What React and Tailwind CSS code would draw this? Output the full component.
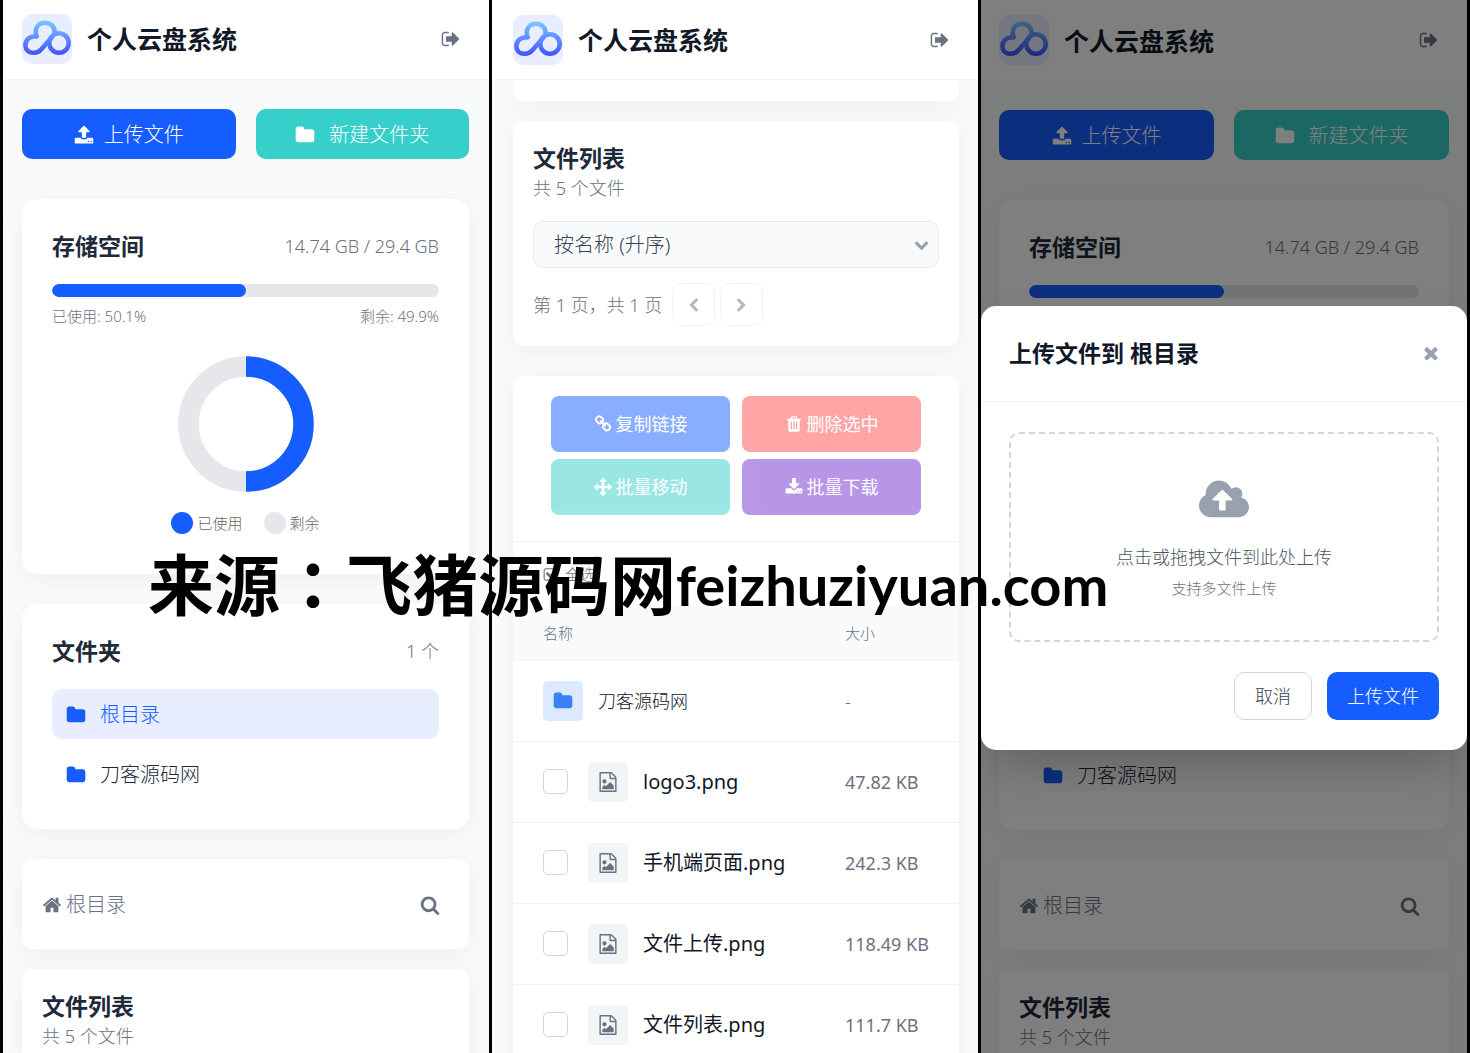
import React, { useState } from 'react';
import clsx from 'clsx';

const ICONS = {
  upload: 'M1344 1472q0-26-19-45t-45-19-45 19-19 45 19 45 45 19 45-19 19-45zm256 0q0-26-19-45t-45-19-45 19-19 45 19 45 45 19 45-19 19-45zm128-224v320q0 40-28 68t-68 28h-1472q-40 0-68-28t-28-68v-320q0-40 28-68t68-28h427q21 56 70.5 92t110.5 36h256q61 0 110.5-36t70.5-92h427q40 0 68 28t28 68zm-325-648q-17 40-59 40h-256v448q0 26-19 45t-45 19h-256q-26 0-45-19t-19-45v-448h-256q-42 0-59-40-17-39 14-69l448-448q18-19 45-19t45 19l448 448q31 30 14 69z',
  folder: 'M1728 608v704q0 92-66 158t-158 66h-1216q-92 0-158-66t-66-158v-960q0-92 66-158t158-66h320q92 0 158 66t66 158v32h672q92 0 158 66t66 158z',
  signOut: 'M704 1440q0 4 1 20t.5 26.5-3 23.5-10 19.5-20.5 6.5h-320q-119 0-203.5-84.5t-84.5-203.5v-704q0-119 84.5-203.5t203.5-84.5h320q13 0 22.5 9.5t9.5 22.5q0 4 1 20t.5 26.5-3 23.5-10 19.5-20.5 6.5h-320q-66 0-113 47t-47 113v704q0 66 47 113t113 47h312l11.5 1 11.5 3 8 5.5 7 9 2 13.5zm928-544q0 26-19 45l-544 544q-19 19-45 19t-45-19-19-45v-288h-448q-26 0-45-19t-19-45v-384q0-26 19-45t45-19h448v-288q0-26 19-45t45-19 45 19l544 544q19 19 19 45z',
  home: 'M1472 992v480q0 26-19 45t-45 19h-384v-384h-256v384h-384q-26 0-45-19t-19-45v-480q0-1 .5-3t.5-3l575-474 575 474q1 2 1 6zm223-69l-62 74q-8 9-21 11h-3q-13 0-21-7l-692-577-692 577q-12 8-24 7-13-2-21-11l-62-74q-8-10-7-23.5t11-21.5l719-599q32-26 76-26t76 26l244 204v-195q0-14 9-23t23-9h192q14 0 23 9t9 23v408l219 182q10 8 11 21.5t-7 23.5z',
  search: 'M1216 832q0-185-131.5-316.5t-316.5-131.5-316.5 131.5-131.5 316.5 131.5 316.5 316.5 131.5 316.5-131.5 131.5-316.5zm512 832q0 52-38 90t-90 38q-54 0-90-38l-343-342q-179 124-399 124-143 0-273.5-55.5t-225-150-150-225-55.5-273.5 55.5-273.5 150-225 225-150 273.5-55.5 273.5 55.5 225 150 150 225 55.5 273.5q0 220-124 399l343 343q37 37 37 90z',
  download: 'M1344 1344q0-26-19-45t-45-19-45 19-19 45 19 45 45 19 45-19 19-45zm256 0q0-26-19-45t-45-19-45 19-19 45 19 45 45 19 45-19 19-45zm128-224v320q0 40-28 68t-68 28h-1472q-40 0-68-28t-28-68v-320q0-40 28-68t68-28h465l135 136q58 56 136 56t136-56l136-136h464q40 0 68 28t28 68zm-325-569q17 41-14 70l-448 448q-18 19-45 19t-45-19l-448-448q-31-29-14-70 17-39 59-39h256v-448q0-26 19-45t45-19h256q26 0 45 19t19 45v448h256q42 0 59 39z',
  trash: 'M704 1376v-704q0-14-9-23t-23-9h-64q-14 0-23 9t-9 23v704q0 14 9 23t23 9h64q14 0 23-9t9-23zm256 0v-704q0-14-9-23t-23-9h-64q-14 0-23 9t-9 23v704q0 14 9 23t23 9h64q14 0 23-9t9-23zm256 0v-704q0-14-9-23t-23-9h-64q-14 0-23 9t-9 23v704q0 14 9 23t23 9h64q14 0 23-9t9-23zm-544-992h448l-48-117q-7-9-17-11h-317q-10 2-17 11zm928 32v64q0 14-9 23t-23 9h-96v948q0 83-47 143.5t-113 60.5h-832q-66 0-113-58.5t-47-141.5v-952h-96q-14 0-23-9t-9-23v-64q0-14 9-23t23-9h309l70-167q15-37 54-63t79-26h320q40 0 79 26t54 63l70 167h309q14 0 23 9t9 23z',
  move: 'M1792 896q0 26-19 45l-256 256q-19 19-45 19t-45-19-19-45v-128h-384v384h128q26 0 45 19t19 45-19 45l-256 256q-19 19-45 19t-45-19l-256-256q-19-19-19-45t19-45 45-19h128v-384h-384v128q0 26-19 45t-45 19-45-19l-256-256q-19-19-19-45t19-45l256-256q19-19 45-19t45 19 19 45v128h384v-384h-128q-26 0-45-19t-19-45 19-45l256-256q19-19 45-19t45 19l256 256q19 19 19 45t-19 45-45 19h-128v384h384v-128q0-26 19-45t45-19 45 19l256 256q19 19 19 45z',
  link: 'M1520 1216q0-40-28-68l-208-208q-28-28-68-28-42 0-72 32 3 3 19 18.5t21.5 21.5 15 19 13 25.5 3.5 27.5q0 40-28 68t-68 28q-15 0-27.5-3.5t-25.5-13-19-15-21.5-21.5-18.5-19q-33 31-33 73 0 40 28 68l206 207q27 27 68 27 40 0 68-26l147-146q28-28 28-67zm-703-705q0-40-28-68l-206-207q-28-28-68-28-39 0-68 27l-147 146q-28 28-28 67 0 40 28 68l208 208q27 27 68 27 42 0 72-31-3-3-19-18.5t-21.5-21.5-15-19-13-25.5-3.5-27.5q0-40 28-68t68-28q15 0 27.5 3.5t25.5 13 19 15 21.5 21.5 18.5 19q33-31 33-73zm895 705q0 120-85 203l-147 146q-83 83-203 83-121 0-204-85l-206-207q-83-83-83-203 0-123 88-209l-88-88q-86 88-208 88-120 0-204-84l-208-208q-84-84-84-204t85-203l147-146q83-83 203-83 121 0 204 85l206 207q83 83 83 203 0 123-88 209l88 88q86-88 208-88 120 0 204 84l208 208q84 84 84 204z',
  times: 'M1490 1322q0 40-28 68l-136 136q-28 28-68 28t-68-28l-294-294-294 294q-28 28-68 28t-68-28l-136-136q-28-28-28-68t28-68l294-294-294-294q-28-28-28-68t28-68l136-136q28-28 68-28t68 28l294 294 294-294q28-28 68-28t68 28l136 136q28 28 28 68t-28 68l-294 294 294 294q28 28 28 68z',
  left: 'M1427 301l-531 531 531 531q19 19 19 45t-19 45l-166 166q-19 19-45 19t-45-19l-742-742q-19-19-19-45t19-45l742-742q19-19 45-19t45 19l166 166q19 19 19 45t-19 45z',
  right: 'M1363 877l-742 742q-19 19-45 19t-45-19l-166-166q-19-19-19-45t19-45l531-531-531-531q-19-19-19-45t19-45l166-166q19-19 45-19t45 19l742 742q19 19 19 45t-19 45z',
  down: 'M1683 808l-742 741q-19 19-45 19t-45-19l-742-741q-19-19-19-45.5t19-45.5l166-165q19-19 45-19t45 19l531 531 531-531q19-19 45-19t45 19l166 165q19 19 19 45.5t-19 45.5z',
  cloudUpload: 'M1216 864q0-14-9-23l-352-352q-9-9-23-9t-23 9l-351 351q-10 12-10 24 0 14 9 23t23 9h224v352q0 13 9.5 22.5t22.5 9.5h192q13 0 22.5-9.5t9.5-22.5v-352h224q13 0 22.5-9.5t9.5-22.5zm640 288q0 159-112.5 271.5t-271.5 112.5h-1088q-185 0-316.5-131.5t-131.5-316.5q0-130 70-240t188-165q-2-30-2-43 0-212 150-362t362-150q156 0 285.5 87t188.5 231q71-62 166-62 106 0 181 75t75 181q0 76-41 138 130 31 213.5 135.5t83.5 238.5z',
  fileImage: 'M1596 380q28 28 48 76t20 88v1152q0 40-28 68t-68 28h-1344q-40 0-68-28t-28-68v-1600q0-40 28-68t68-28h896q40 0 88 20t76 48zm-444-244v376h376q-10-29-22-41l-313-313q-12-12-41-22zm384 1528v-1024h-416q-40 0-68-28t-28-68v-416h-768v1536h1280zm-128-448v320h-1024v-192l192-192 128 128 384-384zm-832-192q-80 0-136-56t-56-136 56-136 136-56 136 56 56 136-56 136-136 56z',
  checkSquare: 'M1472 930v318q0 119-84.5 203.5t-203.5 84.5h-832q-119 0-203.5-84.5t-84.5-203.5v-832q0-119 84.5-203.5t203.5-84.5h832q63 0 117 25 15 7 18 23 3 17-9 29l-49 49q-10 10-23 10-3 0-9-2-23-6-45-6h-832q-66 0-113 47t-47 113v832q0 66 47 113t113 47h832q66 0 113-47t47-113v-254q0-13 9-22l64-64q10-10 23-10 6 0 12 3 20 8 20 29zm231-489l-814 814q-24 24-57 24t-57-24l-430-430q-24-24-24-57t24-57l110-110q24-24 57-24t57 24l263 263 647-647q24-24 57-24t57 24l110 110q24 24 24 57t-24 57z',
};

const files = [
  { name: 'logo3.png', size: '47.82 KB' },
  { name: '手机端页面.png', size: '242.3 KB' },
  { name: '文件上传.png', size: '118.49 KB' },
  { name: '文件列表.png', size: '111.7 KB' },
];

const batchActions = [
  { label: '复制链接', icon: 'link', color: 'bg-[#165dff]' },
  { label: '删除选中', icon: 'trash', color: 'bg-[#ff4d4f]' },
  { label: '批量移动', icon: 'move', color: 'bg-[#36cfc9]' },
  { label: '批量下载', icon: 'download', color: 'bg-[#722ed1]' },
];

const CARD_SHADOW = 'shadow-[0_5px_25px_rgba(0,0,0,0.05)]';

function Icon({ name, className, viewBox = '0 0 1792 1792' }) {
  return (
    <svg viewBox={viewBox} fill="currentColor" className={clsx('shrink-0', className)} aria-hidden="true">
      <path d={ICONS[name]} />
    </svg>
  );
}

function Logo({ id }) {
  return (
    <svg viewBox="0 0 50 50" className="w-[50px] h-[50px] rounded-[10px] bg-[#e8eeff]" aria-hidden="true">
      <defs>
        <linearGradient id={id} gradientUnits="userSpaceOnUse" x1="0" y1="7" x2="0" y2="41">
          <stop offset="0" stopColor="#78c8ff" />
          <stop offset="1" stopColor="#4350ff" />
        </linearGradient>
      </defs>
      <g fill="none" stroke={`url(#${id})`} strokeWidth="4.500" strokeLinecap="round" strokeLinejoin="round">
        <path d="M14.6 22.2C12 14.5 16 8.800 23 8.800c6.400 0 10.400 4.600 9.600 11" />
        <path d="M14.6 22.2C7.600 21.600 3.400 25.800 3.400 31c0 5 3.600 7.800 8.200 7.800 3.600 0 5.800-1.200 8-3.800L30 23" />
        <circle cx="37" cy="29" r="9.700" />
      </g>
    </svg>
  );
}

function Header({ id, className }) {
  return (
    <header className={clsx('relative z-10 flex items-center bg-white border-b border-gray-100 pr-7', className)}>
      <Logo id={id} />
      <h1 className="ml-[15px] flex-1 pt-[2px] text-[25px] leading-[35px] font-bold text-[#111827]">个人云盘系统</h1>
      <button className="text-gray-500" aria-label="退出">
        <Icon name="signOut" className="w-5 h-5" />
      </button>
    </header>
  );
}

function Donut() {
  return (
    <svg viewBox="0 0 136 136" className="w-[136px] h-[136px]" aria-hidden="true">
      <circle cx="68" cy="68" r="57.500" fill="none" stroke="#e5e7eb" strokeWidth="20.500" />
      <path d="M68 10.500a57.500 57.500 0 0 1 0 115" fill="none" stroke="#165dff" strokeWidth="20.500" />
    </svg>
  );
}

function StorageCard() {
  return (
    <section className={clsx('rounded-[15px] bg-white p-[30px] pb-10', CARD_SHADOW)}>
      <div className="flex items-center justify-between">
        <h2 className="text-[23px] leading-[35px] font-bold text-gray-800">存储空间</h2>
        <span className="text-lg leading-[25px] text-gray-500">14.74 GB / 29.4 GB</span>
      </div>
      <div className="mt-5 h-[13px] overflow-hidden rounded-full bg-gray-200">
        <div className="h-full rounded-full bg-[#165dff]" style={{ width: '50.1%' }} />
      </div>
      <div className="mt-[9px] flex justify-between text-[15px] leading-5 text-gray-500">
        <span>已使用: 50.1%</span>
        <span>剩余: 49.9%</span>
      </div>
      <div className="mt-[30px] flex flex-col items-center">
        <Donut />
        <div className="mt-5 flex items-center gap-[21px] text-[15px] leading-[22px] text-[#666]">
          <span className="flex items-center gap-1">
            <i className="h-[22px] w-[22px] rounded-full bg-[#165dff]" />
            已使用
          </span>
          <span className="flex items-center gap-1">
            <i className="h-[22px] w-[22px] rounded-full bg-gray-200" />
            剩余
          </span>
        </div>
      </div>
    </section>
  );
}

function FolderCard() {
  return (
    <section className={clsx('rounded-[15px] bg-white p-[30px]', CARD_SHADOW)}>
      <div className="flex items-center justify-between">
        <h2 className="text-[23px] leading-[35px] font-bold text-gray-800">文件夹</h2>
        <span className="text-lg leading-[25px] text-gray-500">1 个</span>
      </div>
      <nav className="mt-5 flex flex-col gap-[10px] text-xl">
        <a href="#root" className="flex h-[50px] items-center gap-[14px] rounded-[10px] bg-[#e8eeff] px-[14px] pt-[2px] text-[#165dff]">
          <Icon name="folder" className="w-5 h-5" />
          根目录
        </a>
        <a href="#folder" className="flex h-[50px] items-center gap-[14px] rounded-[10px] px-[14px] pt-[2px] text-gray-800">
          <Icon name="folder" className="w-5 h-5 text-[#165dff]" />
          刀客源码网
        </a>
      </nav>
    </section>
  );
}

function ListTitle() {
  return (
    <>
      <h2 className="text-[23px] leading-[35px] font-bold text-gray-800">文件列表</h2>
      <p className="text-lg leading-[25px] text-gray-500">共 5 个文件</p>
    </>
  );
}

function HomeContent({ className }) {
  return (
    <div className={clsx('pt-[29px]', className)}>
      <div className="grid grid-cols-2 gap-5 text-xl text-white">
        <button className="flex h-[50px] items-center justify-center gap-[10px] rounded-[10px] bg-[#165dff] pt-[2px]">
          <Icon name="upload" className="w-5 h-5" />
          上传文件
        </button>
        <button className="flex h-[50px] items-center justify-center gap-[14px] rounded-[10px] bg-[#36cfc9] pt-[2px]">
          <Icon name="folder" className="w-5 h-5" />
          新建文件夹
        </button>
      </div>
      <div className="mt-10 flex flex-col gap-[30px]">
        <StorageCard />
        <FolderCard />
      </div>
      <div className={clsx('mt-[30px] flex h-[90px] items-center justify-between rounded-[10px] bg-white pl-5 pr-[29px] pt-[2px] text-gray-500', CARD_SHADOW)}>
        <a href="#root" className="flex items-center gap-1 text-xl">
          <Icon name="home" className="w-5 h-5" />
          根目录
        </a>
        <button aria-label="搜索">
          <Icon name="search" className="w-5 h-5" />
        </button>
      </div>
      <section className={clsx('mt-5 rounded-[10px] bg-white p-5', CARD_SHADOW)}>
        <ListTitle />
      </section>
    </div>
  );
}

function FileTable() {
  return (
    <table className="w-full table-fixed text-left">
      <thead>
        <tr className="h-[53px] border-b border-gray-100 bg-[#f9fafb] text-[15px] text-gray-500">
          <th className="pl-[30px] font-light">名称</th>
          <th className="w-36 pl-[30px] font-light">大小</th>
        </tr>
      </thead>
      <tbody>
        <tr className="h-[81px] border-b border-gray-100">
          <td className="pl-[30px]">
            <div className="flex items-center gap-[15px]">
              <span className="flex h-10 w-10 items-center justify-center rounded-[5px] bg-blue-100 text-[#3b82f6]">
                <Icon name="folder" className="w-5 h-5" />
              </span>
              <span className="text-lg text-gray-900">刀客源码网</span>
            </div>
          </td>
          <td className="pl-[30px] text-lg text-gray-500">-</td>
        </tr>
        {files.map((f) => (
          <tr key={f.name} className="h-[81px] border-b border-gray-100">
            <td className="pl-[30px]">
              <div className="flex items-center">
                <input
                  type="checkbox"
                  aria-label={f.name}
                  className="h-[25px] w-[25px] appearance-none rounded-[5px] border border-gray-300 bg-white checked:bg-[#165dff]"
                />
                <span className="ml-5 flex h-10 w-10 items-center justify-center rounded-[5px] bg-gray-100 text-gray-500">
                  <Icon name="fileImage" className="w-5 h-5" />
                </span>
                <span className="ml-[15px] text-xl font-normal text-gray-900">{f.name}</span>
              </div>
            </td>
            <td className="pl-[30px] text-lg font-normal text-gray-500">{f.size}</td>
          </tr>
        ))}
      </tbody>
    </table>
  );
}

function ListContent() {
  const [sort, setSort] = useState('name');

  return (
    <div className="pl-[21px] pr-[19px]">
      <div className={clsx('h-[21px] rounded-b-[10px] bg-white', CARD_SHADOW)} />
      <section className={clsx('mt-5 rounded-[10px] bg-white p-5', CARD_SHADOW)}>
        <ListTitle />
        <div className="relative mt-5">
          <select
            value={sort}
            onChange={(e) => setSort(e.target.value)}
            aria-label="排序"
            className="h-[47px] w-full appearance-none rounded-[10px] border border-gray-200 bg-[#f9fafb] px-5 text-xl text-gray-700"
          >
            <option value="name">按名称 (升序)</option>
            <option value="size">按大小 (升序)</option>
          </select>
          <Icon name="down" className="pointer-events-none absolute right-[10px] top-4 w-[15px] h-[15px] text-gray-400" />
        </div>
        <div className="mt-[15px] flex items-center text-lg text-gray-500">
          <span>第 1 页，共 1 页</span>
          <button disabled aria-label="上一页" className="ml-[10px] flex h-[43px] w-[43px] items-center justify-center rounded-[10px] border border-gray-200 pt-[2px] opacity-50">
            <Icon name="left" className="w-[15px] h-[15px]" />
          </button>
          <button disabled aria-label="下一页" className="ml-[5px] flex h-[43px] w-[43px] items-center justify-center rounded-[10px] border border-gray-200 pt-[2px] opacity-50">
            <Icon name="right" className="w-[15px] h-[15px]" />
          </button>
        </div>
      </section>

      <section className={clsx('mt-[30px] rounded-t-[10px] bg-white', CARD_SHADOW)}>
        <div className="grid grid-cols-2 gap-x-3 gap-y-[7px] border-b border-gray-100 px-[38px] pt-5 pb-[26px]">
          {batchActions.map((a) => (
            <button
              key={a.label}
              disabled
              className={clsx('flex h-14 items-center justify-center gap-1 rounded-[8px] text-lg font-normal text-white opacity-50', a.color)}
            >
              <Icon name={a.icon} className="w-[18px] h-[18px]" />
              {a.label}
            </button>
          ))}
        </div>
        <div className="flex h-[65px] items-center px-[30px]">
          <button className="flex items-center gap-[6px] text-[15px] text-gray-500">
            <Icon name="checkSquare" className="w-4 h-4" />
            全选
          </button>
        </div>
        <FileTable />
      </section>
    </div>
  );
}

function UploadModal() {
  return (
    <div className="absolute inset-0 z-20 flex items-center bg-black/50 pt-[2px]">
      <div role="dialog" aria-label="上传文件到 根目录" className="w-full rounded-[15px] bg-white shadow-2xl">
        <div className="flex h-24 items-center justify-between border-b border-gray-100 pl-7 pr-[26px]">
          <h2 className="text-[23px] leading-[35px] font-bold text-gray-900">上传文件到 根目录</h2>
          <button aria-label="关闭" className="text-gray-400">
            <Icon name="times" className="w-5 h-5" />
          </button>
        </div>
        <div className="px-7 py-[30px]">
          <div className="flex h-[210px] flex-col items-center rounded-[10px] border-2 border-dashed border-gray-300 pt-[43px]">
            <Icon name="cloudUpload" viewBox="-64 0 1920 1792" className="h-[47px] w-[50px] text-gray-400" />
            <p className="mt-[21px] text-lg leading-[25px] text-gray-600">点击或拖拽文件到此处上传</p>
            <p className="mt-2 text-[15px] leading-5 text-gray-500">支持多文件上传</p>
          </div>
          <div className="mt-[30px] flex justify-end gap-[15px] text-lg">
            <button className="h-[48px] rounded-[10px] border border-gray-300 px-5 text-gray-700">取消</button>
            <button className="h-[48px] rounded-[10px] bg-[#165dff] px-5 text-white">上传文件</button>
          </div>
        </div>
      </div>
    </div>
  );
}

export default function App() {
  return (
    <div className="relative grid h-screen grid-cols-3 gap-[3px] overflow-hidden bg-black px-[3px] font-light font-['Noto_Sans','Noto_Sans_CJK_SC',sans-serif]">
      <main className="overflow-hidden bg-[#f9fafb]">
        <Header id="logo-home" className="h-20 pb-[2px] pl-[19px]" />
        <HomeContent className="pl-[19px] pr-5" />
      </main>
      <main className="overflow-hidden bg-[#f9fafb]">
        <Header id="logo-list" className="h-20 pl-[21px]" />
        <ListContent />
      </main>
      <main className="relative overflow-hidden bg-[#f9fafb]">
        <Header id="logo-upload" className="h-[81px] pl-[18px]" />
        <HomeContent className="px-[18px]" />
        <UploadModal />
      </main>
      <div className="pointer-events-none absolute left-[148px] top-[545px] z-30 flex items-center whitespace-nowrap font-bold text-black">
        <span className="font-['Noto_Sans_CJK_TC',sans-serif] text-[66px] leading-[64px]">来源：飞猪源码网</span>
        <span className="pt-2 font-['Lato',sans-serif] text-[56px] leading-[64px]">feizhuziyuan.com</span>
      </div>
    </div>
  );
}
